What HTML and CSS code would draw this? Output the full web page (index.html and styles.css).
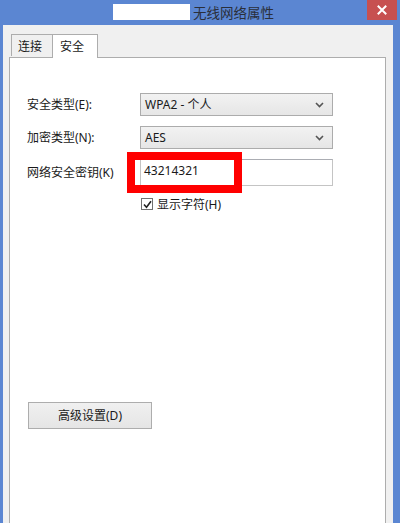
FILE: index.html
```html
<!DOCTYPE html>
<html lang="zh-CN">
<head>
<meta charset="utf-8">
<link rel="stylesheet" href="styles.css">
</head>
<body>
<div class="window">
  <div class="titlebar">
    <div class="title-mask"></div>
    <div class="title-text">无线网络属性</div>
    <div class="close-btn">
      <svg width="10" height="10" viewBox="0 0 10 10"><path d="M1.5 1.5 L8.5 8.5 M8.5 1.5 L1.5 8.5" stroke="#fff" stroke-width="2" stroke-linecap="square"/></svg>
    </div>
  </div>
  <div class="client">
    <div class="tabs">
      <div class="tab">连接</div>
      <div class="tab active">安全</div>
    </div>
    <div class="panel">
      <div class="form">
        <div class="label">安全类型(E):</div>
        <div class="select"><span>WPA2 - 个人</span><svg class="chev" width="9" height="6" viewBox="0 0 9 6"><path d="M1 1 L4.5 4.5 L8 1" stroke="#555" stroke-width="1.6" fill="none"/></svg></div>
        <div class="label">加密类型(N):</div>
        <div class="select"><span>AES</span><svg class="chev" width="9" height="6" viewBox="0 0 9 6"><path d="M1 1 L4.5 4.5 L8 1" stroke="#555" stroke-width="1.6" fill="none"/></svg></div>
        <div class="label">网络安全密钥(K)</div>
        <div class="input-wrap">
          <div class="input">43214321</div>
          <div class="highlight"></div>
        </div>
        <div></div>
        <label class="check">
          <span class="box"><svg width="9" height="9" viewBox="0 0 9 9"><path d="M1 4.5 L3.5 7.2 L8 1.2" stroke="#222" stroke-width="1.6" fill="none"/></svg></span>
          <span>显示字符(H)</span>
        </label>
      </div>
      <div class="btn">高级设置(D)</div>
    </div>
  </div>
</div>
</body>
</html>
```
FILE: styles.css
```css
* { box-sizing: border-box; }
html, body { margin: 0; padding: 0; }
body {
  width: 400px;
  height: 523px;
  overflow: hidden;
  font-family: "Noto Sans", "Noto Sans CJK SC", sans-serif;
  font-size: 12px;
  color: #1a1a1a;
}
.window {
  width: 400px;
  height: 523px;
  background: #5b86d2;
  display: flex;
  flex-direction: column;
}
.titlebar {
  height: 25px;
  display: flex;
  align-items: flex-start;
  padding-left: 113px;
  flex: none;
}
.title-mask {
  width: 77px;
  height: 16px;
  margin-top: 4px;
  background: #ffffff;
}
.title-text {
  margin-left: 3px;
  margin-top: 2px;
  font-family: "Noto Sans CJK SC", sans-serif;
  font-size: 13.5px;
  line-height: 20px;
  color: #2a2f3a;
}
.close-btn {
  margin-left: auto;
  margin-right: 3px;
  width: 30px;
  height: 20px;
  background: #c75050;
  display: flex;
  align-items: center;
  justify-content: center;
}
.client {
  flex: 1;
  margin: 0 7px 0 3px;
  background: #f0f0f0;
  padding: 8px 7px 0 6px;
  display: flex;
  flex-direction: column;
}
.tabs {
  display: flex;
  align-items: flex-end;
  padding-left: 2px;
  height: 24px;
  position: relative;
  z-index: 1;
}
.tab {
  height: 22px;
  width: 42px;
  border: 1px solid #adadad;
  border-bottom: none;
  background: #f0f0f0;
  font-family: "Noto Sans CJK SC", sans-serif;
  font-size: 12px;
  line-height: 22px;
  padding-left: 6px;
  margin-bottom: 1px;
}
.tab.active {
  height: 24px;
  width: 46px;
  background: #ffffff;
  margin-bottom: -1px;
  margin-left: -1px;
  padding-left: 7px;
  line-height: 22px;
}
.panel {
  flex: 1;
  background: #ffffff;
  border: 1px solid #adadad;
  border-bottom: none;
  padding: 35px 0 0 17px;
}
.form {
  display: grid;
  grid-template-columns: 113px 193px;
  row-gap: 10px;
  align-items: center;
}
.label {
  font-size: 12px;
  line-height: 16px;
}
.select {
  height: 23px;
  border: 1px solid #acacac;
  background: linear-gradient(#f2f2f2, #e6e6e6);
  display: flex;
  align-items: center;
  padding: 0 8px 0 4px;
  font-size: 12px;
}
.select span { flex: 1; line-height: 16px; }
.chev { flex: none; }
.input-wrap {
  position: relative;
  height: 27px;
}
.input {
  height: 27px;
  border: 1px solid #c4c4c4;
  border-top-color: #abadb3;
  background: #fff;
  padding: 3px 0 0 3px;
  line-height: 16px;
  font-size: 12px;
}
.highlight {
  position: absolute;
  left: -13px;
  top: -7px;
  width: 115px;
  height: 41px;
  border: 8px solid #ff0000;
}
.check {
  display: flex;
  align-items: center;
  gap: 4px;
  height: 16px;
  margin-top: 0;
  font-size: 12px;
}
.box {
  width: 12px;
  height: 12px;
  border: 1px solid #707070;
  background: #fff;
  display: flex;
  align-items: center;
  justify-content: center;
  margin-left: 1px;
}
.btn {
  margin-top: 190px;
  margin-left: 1px;
  width: 124px;
  height: 27px;
  border: 1px solid #adadad;
  background: linear-gradient(#f0f0f0, #e5e5e5);
  text-align: center;
  line-height: 25px;
  font-size: 12px;
}
```
